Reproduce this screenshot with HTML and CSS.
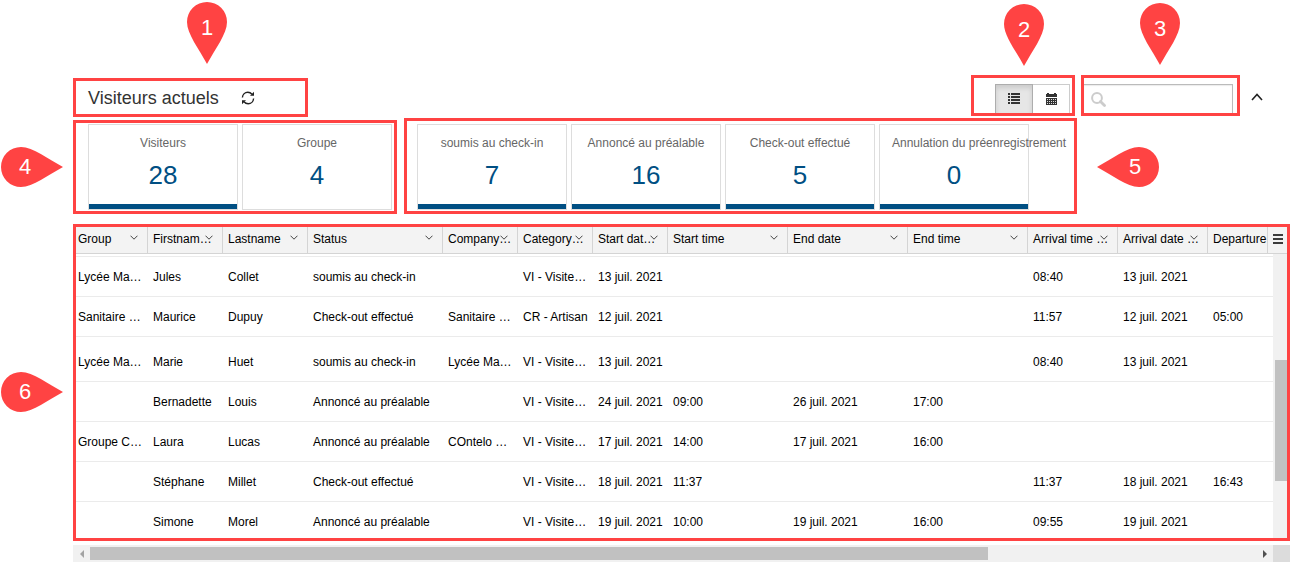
FILE: index.html
```html
<!DOCTYPE html>
<html lang="fr">
<head>
<meta charset="utf-8">
<title>Visiteurs actuels</title>
<link rel="stylesheet" href="styles.css">
</head>
<body>
<svg class="defs" aria-hidden="true">
  <symbol id="pin-down" viewBox="0 0 40 62"><path d="M20 62C12 47 0 32 0 20a20 20 0 0 1 40 0c0 12-12 27-20 42z"/></symbol>
  <symbol id="pin-right" viewBox="0 0 62 40"><path d="M62 20C47 12 32 0 20 0a20 20 0 0 0 0 40c12 0 27-12 42-20z"/></symbol>
  <symbol id="pin-left" viewBox="0 0 62 40"><path d="M0 20C15 12 30 0 42 0a20 20 0 0 1 0 40C30 40 15 28 0 20z"/></symbol>
  <symbol id="caret" viewBox="0 0 8 5"><path d="M.5.7L4 4.200 7.500.7" fill="none" stroke="currentColor"/></symbol>
</svg>
<main class="page">
  <header class="topbar">
    <section class="frame heading">
      <h1>Visiteurs actuels</h1>
      <button class="icon-button" type="button" aria-label="Actualiser">
        <svg width="14" height="14" viewBox="0 0 14 14"><path d="M1.400 6.500C1.600 3.500 4 1.300 6.800 1.300c1.800 0 3.200.8 4.200 2M12.600 7.500c-.2 3-2.600 5.200-5.400 5.200-1.800 0-3.200-.8-4.200-2" fill="none" stroke="currentColor" stroke-width="1.400"/><path d="M13 .8v4H9zM1 13.200v-4h4z" fill="currentColor"/></svg>
      </button>
      <div class="pin pin-1"><svg><use href="#pin-down"/></svg><span>1</span></div>
    </section>
    <section class="frame views">
      <button class="view active" type="button" aria-label="Liste">
        <svg width="12" height="12" viewBox="0 0 12 12" fill="currentColor"><path d="M0 0h2v2H0zM3 0h9v2H3zM0 3h2v2H0zM3 3h9v2H3zM0 6h2v2H0zM3 6h9v2H3zM0 9h2v2H0zM3 9h9v2H3z"/></svg>
      </button>
      <button class="view" type="button" aria-label="Calendrier">
        <svg width="11" height="12" viewBox="0 0 11 12"><path d="M1 0h2v1h5V0h2v1h1v3H0V1h1zM0 5h11v7H0z" fill="currentColor"/><path d="M1 6h1v1H1zM3 6h1v1H3zM5 6h1v1H5zM7 6h1v1H7zM9 6h1v1H9zM1 8h1v1H1zM3 8h1v1H3zM5 8h1v1H5zM7 8h1v1H7zM9 8h1v1H9zM1 10h1v1H1zM3 10h1v1H3zM5 10h1v1H5zM7 10h1v1H7zM9 10h1v1H9z" fill="#ddd"/></svg>
      </button>
      <div class="pin pin-2"><svg><use href="#pin-down"/></svg><span>2</span></div>
    </section>
    <section class="frame search">
      <input type="search" aria-label="Rechercher">
      <svg class="glass" width="15" height="15" viewBox="0 0 15 15" fill="none" stroke="#ccc"><circle cx="6" cy="6" r="4.900" stroke-width="2"/><path d="M9.500 9.500l4 4" stroke-width="2.800" stroke-linecap="round"/></svg>
      <div class="pin pin-3"><svg><use href="#pin-down"/></svg><span>3</span></div>
    </section>
    <button class="icon-button collapse" type="button" aria-label="Réduire">
      <svg width="12" height="8" viewBox="0 0 12 8"><path d="M1 7l5-5.500L11 7" fill="none" stroke="currentColor" stroke-width="1.600"/></svg>
    </button>
  </header>

  <div class="summary">
    <section class="frame totals">
      <div class="card selected"><span>Visiteurs</span><strong>28</strong></div>
      <div class="card"><span>Groupe</span><strong>4</strong></div>
      <div class="pin side pin-4"><svg><use href="#pin-right"/></svg><span>4</span></div>
    </section>
    <section class="frame states">
      <div class="card selected"><span>soumis au check-in</span><strong>7</strong></div>
      <div class="card selected"><span>Annoncé au préalable</span><strong>16</strong></div>
      <div class="card selected"><span>Check-out effectué</span><strong>5</strong></div>
      <div class="card selected"><span>Annulation du préenregistrement</span><strong>0</strong></div>
      <div class="pin side back pin-5"><svg><use href="#pin-left"/></svg><span>5</span></div>
    </section>
  </div>

  <section class="frame grid">
    <table>
      <colgroup>
        <col class="c-first"><col class="c-s"><col class="c-m"><col class="c-xl"><col class="c-s"><col class="c-s"><col class="c-s"><col class="c-l"><col class="c-l"><col class="c-l"><col class="c-n"><col class="c-n"><col>
      </colgroup>
      <thead>
        <tr>
          <th>Group<svg><use href="#caret"/></svg></th>
          <th>Firstnam…<svg><use href="#caret"/></svg></th>
          <th>Lastname<svg><use href="#caret"/></svg></th>
          <th>Status<svg><use href="#caret"/></svg></th>
          <th>Company…<svg><use href="#caret"/></svg></th>
          <th>Category…<svg><use href="#caret"/></svg></th>
          <th>Start dat…<svg><use href="#caret"/></svg></th>
          <th>Start time<svg><use href="#caret"/></svg></th>
          <th>End date<svg><use href="#caret"/></svg></th>
          <th>End time<svg><use href="#caret"/></svg></th>
          <th>Arrival time …<svg><use href="#caret"/></svg></th>
          <th>Arrival date …<svg><use href="#caret"/></svg></th>
          <th>Departure</th>
        </tr>
      </thead>
      <tbody>
        <tr class="scrolled"><td colspan="13"></td></tr>
        <tr><td>Lycée Ma…</td><td>Jules</td><td>Collet</td><td>soumis au check-in</td><td></td><td>VI - Visite…</td><td>13 juil. 2021</td><td></td><td></td><td></td><td>08:40</td><td>13 juil. 2021</td><td></td></tr>
        <tr><td>Sanitaire …</td><td>Maurice</td><td>Dupuy</td><td>Check-out effectué</td><td>Sanitaire …</td><td>CR - Artisan</td><td>12 juil. 2021</td><td></td><td></td><td></td><td>11:57</td><td>12 juil. 2021</td><td>05:00</td></tr>
        <tr class="spaced"><td>Lycée Ma…</td><td>Marie</td><td>Huet</td><td>soumis au check-in</td><td>Lycée Ma…</td><td>VI - Visite…</td><td>13 juil. 2021</td><td></td><td></td><td></td><td>08:40</td><td>13 juil. 2021</td><td></td></tr>
        <tr><td></td><td>Bernadette</td><td>Louis</td><td>Annoncé au préalable</td><td></td><td>VI - Visite…</td><td>24 juil. 2021</td><td>09:00</td><td>26 juil. 2021</td><td>17:00</td><td></td><td></td><td></td></tr>
        <tr><td>Groupe C…</td><td>Laura</td><td>Lucas</td><td>Annoncé au préalable</td><td>COntelo …</td><td>VI - Visite…</td><td>17 juil. 2021</td><td>14:00</td><td>17 juil. 2021</td><td>16:00</td><td></td><td></td><td></td></tr>
        <tr><td></td><td>Stéphane</td><td>Millet</td><td>Check-out effectué</td><td></td><td>VI - Visite…</td><td>18 juil. 2021</td><td>11:37</td><td></td><td></td><td>11:37</td><td>18 juil. 2021</td><td>16:43</td></tr>
        <tr class="last"><td></td><td>Simone</td><td>Morel</td><td>Annoncé au préalable</td><td></td><td>VI - Visite…</td><td>19 juil. 2021</td><td>10:00</td><td>19 juil. 2021</td><td>16:00</td><td>09:55</td><td>19 juil. 2021</td><td></td></tr>
      </tbody>
    </table>
    <div class="vbar"><div class="vthumb"></div></div>
    <button class="grid-menu" type="button" aria-label="Menu des colonnes">
      <svg width="10" height="10" viewBox="0 0 10 10"><path d="M0 1h10M0 5h10M0 9h10" stroke="currentColor" stroke-width="1.500" stroke-linecap="round"/></svg>
    </button>
    <div class="pin side pin-6"><svg><use href="#pin-right"/></svg><span>6</span></div>
  </section>

  <div class="hbar">
    <button type="button" aria-label="Défiler à gauche"><svg width="4" height="8" viewBox="0 0 4 8"><path d="M4 0v8L0 4z" fill="#a3a3a3"/></svg></button>
    <div class="htrack"><div class="hthumb"></div></div>
    <button type="button" aria-label="Défiler à droite"><svg width="4" height="8" viewBox="0 0 4 8"><path d="M0 0v8l4-4z" fill="#505050"/></svg></button>
    <div class="corner"></div>
  </div>
</main>
</body>
</html>
```
FILE: styles.css
```css
* { box-sizing: border-box; }

body {
  margin: 0;
  background: #fff;
  color: #000;
  font: 12px/16px "Liberation Sans", Arial, sans-serif;
}

button {
  display: flex;
  align-items: center;
  justify-content: center;
  margin: 0;
  padding: 0;
  border: 0;
  background: none;
  color: #222;
}

.defs { position: absolute; width: 0; height: 0; }

.page { padding: 75px 0 0 73px; }

.frame {
  position: relative;
  border: 3px solid #ff4343;
}

/* numbered markers */
.pin {
  position: absolute;
  z-index: 2;
  width: 40px;
  height: 62px;
  padding-top: 14px;
  color: #fff;
  font-size: 22px;
  line-height: 24px;
  text-align: center;
}
.pin svg {
  position: absolute;
  inset: 0;
  width: 100%;
  height: 100%;
  fill: #ff4343;
}
.pin span { position: relative; }
.pin.side { width: 62px; height: 40px; padding: 8px 14px 0 0; }
.pin.side.back { padding: 8px 0 0 14px; }
.pin-1 { left: 111px; top: -79px; }
.pin-2 { left: 30px; top: -74px; }
.pin-3 { left: 56px; top: -75px; }
.pin-4 { left: -75px; top: 24px; }
.pin-5 { left: 690px; top: 26px; }
.pin-6 { left: -75px; top: 145px; }

/* title, view switch, search */
.topbar { display: flex; align-items: flex-start; }

.heading {
  display: flex;
  align-items: center;
  gap: 22px;
  min-width: 235px;
  margin: 3px auto 0 0;
  padding: 5px 12px 4px;
}
h1 {
  margin: 0;
  color: #333;
  font-size: 18px;
  line-height: 24px;
  font-weight: 400;
}

.views { display: flex; padding: 6px 2px 0 21px; }
.view {
  width: 37px;
  height: 29px;
  border: 1px solid #ccc;
  border-width: 1px 1px 0 0;
  color: #333;
}
.view.active {
  width: 38px;
  border-color: #adadad;
  border-left-width: 1px;
  background: #e6e6e6;
  box-shadow: inset 0 3px 5px rgba(0, 0, 0, .12);
}

.search { width: 159px; margin-left: 6px; padding: 6px 4px 0 0; }
.search input {
  display: block;
  width: 100%;
  height: 29px;
  margin: 0;
  padding: 0 8px 0 28px;
  border: 1px solid #bbb;
  border-width: 1px 1px 0 0;
  border-radius: 0;
  outline: 0;
  background: #fff;
  box-shadow: inset 0 1px 1px rgba(0, 0, 0, .08);
  font: inherit;
  appearance: none;
}
.glass { position: absolute; left: 7px; top: 14px; }

.collapse { width: 50px; height: 42px; padding: 2px 16px 0 0; }

/* counters */
.summary { display: flex; align-items: flex-end; gap: 7px; margin-top: 1px; }
.totals, .states { display: flex; gap: 4px; }
.totals { padding: 1px 2px 1px 12px; }
.states { padding: 3px 45px 1px 10px; }
.card {
  width: 150px;
  height: 86px;
  padding: 10px 12px 0;
  border: 1px solid #ddd;
  text-align: center;
  white-space: nowrap;
}
.card.selected { box-shadow: inset 0 -5px #004f83; }
.card span { display: block; color: #666; }
.card strong {
  display: block;
  margin-top: 8px;
  color: #004f83;
  font-size: 26px;
  line-height: 32px;
  font-weight: 400;
}

/* visitor list */
.grid { display: flex; margin-top: 10px; }
table {
  flex: 1;
  width: 0;
  border-collapse: separate;
  border-spacing: 0;
  table-layout: fixed;
}
.c-first { width: 72px; }
.c-s { width: 75px; }
.c-m { width: 85px; }
.c-n { width: 90px; }
.c-l { width: 120px; }
.c-xl { width: 135px; }
th {
  position: relative;
  padding: 4px 0 6px 5px;
  border: solid #d4d4d4;
  border-width: 0 1px 1px 0;
  background: #f3f3f3;
  font-weight: 400;
  text-align: left;
  white-space: nowrap;
}
th svg {
  position: absolute;
  right: 9px;
  top: 8px;
  width: 8px;
  height: 5px;
  color: #444;
}
td {
  padding: 12px 0 11px 5px;
  border-bottom: 1px solid #ebebeb;
  white-space: nowrap;
}
th:first-child, td:first-child { padding-left: 2px; }
th:last-child { border-right: 0; }
.scrolled td { height: 3px; padding: 0; }
.spaced td { padding-top: 17px; }
.last td { padding-bottom: 8px; border-bottom: 0; }

.vbar { width: 14px; padding: 133px 0 0 2px; background: #f1f1f1; }
.vthumb { height: 121px; background: #c1c1c1; }
.grid-menu {
  position: absolute;
  top: 0;
  right: 0;
  width: 20px;
  height: 27px;
  padding-bottom: 2px;
  border: solid #d4d4d4;
  border-width: 0 0 1px 1px;
  background: #f3f3f3;
  color: #000;
}

.hbar { display: flex; height: 17px; margin-top: 4px; background: #f1f1f1; }
.hbar button { width: 17px; }
.htrack { flex: 1; padding: 2px 0; }
.hthumb { width: 77%; height: 13px; background: #c1c1c1; }
.corner { width: 17px; background: #dcdcdc; }
```
